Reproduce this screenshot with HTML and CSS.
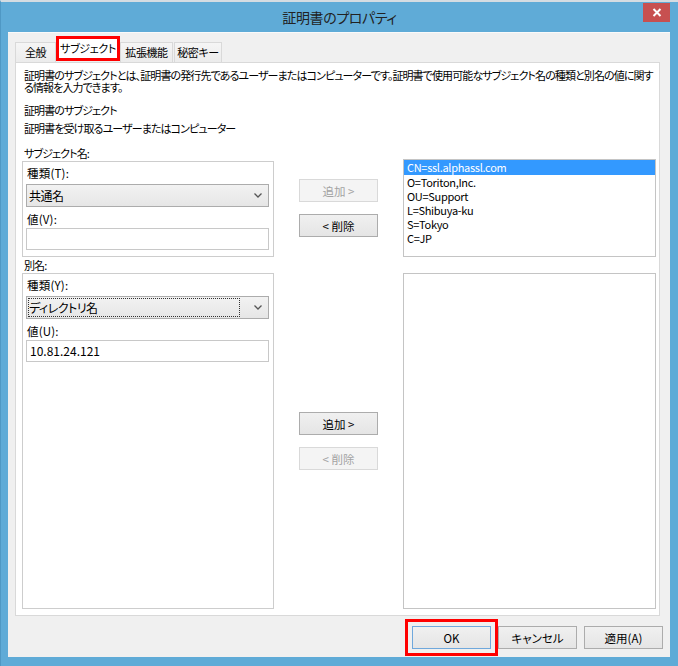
FILE: index.html
```html
<!DOCTYPE html>
<html lang="ja">
<head>
    <meta charset="UTF-8">
    <title>証明書のプロパティ</title>
    <link rel="stylesheet" href="styles.css">
</head>
<body>

<div class="window">
    <!-- Title bar -->
    <div class="titlebar">
        <span class="title">証明書のプロパティ</span>
        <div class="close">
            <svg width="10" height="9" viewBox="0 0 10 9">
                <path d="M1.5 1 L8.5 8 M8.5 1 L1.5 8" stroke="#fff" stroke-width="2" fill="none"/>
            </svg>
        </div>
    </div>

    <div class="client">
        <div class="tabs">
            <div class="tab t1">全般</div>
            <div class="tab t2 selected">サブジェクト</div>
            <div class="tab t3">拡張機能</div>
            <div class="tab t4">秘密キー</div>
        </div>

        <div class="panel">
            <p class="desc">証明書のサブジェクトとは、証明書の発行先であるユーザーまたはコンピューターです。証明書で使用可能なサブジェクト名の種類と別名の値に関す<br>る情報を入力できます。</p>
            <p class="heading">証明書のサブジェクト</p>
            <p class="sub">証明書を受け取るユーザーまたはコンピューター</p>

            <div class="fields">
                <!-- Subject name -->
                <div class="label row1">サブジェクト名:</div>
                <div class="group row2">
                    <div class="flabel">種類(T):</div>
                    <div class="combo">
                        <span class="combo-text">共通名</span>
                        <svg class="chevron" width="8" height="5" viewBox="0 0 8 5"><path d="M0.5 0.5 L4 4 L7.5 0.5" stroke="#555" stroke-width="1.3" fill="none"/></svg>
                    </div>
                    <div class="flabel gap">値(V):</div>
                    <div class="input"></div>
                </div>
                <div class="btns top">
                    <button class="btn" disabled>追加 &gt;</button>
                    <button class="btn">&lt; 削除</button>
                </div>
                <ul class="list top">
                    <li class="sel">CN=ssl.alphassl.com</li>
                    <li>O=Toriton,Inc.</li>
                    <li>OU=Support</li>
                    <li>L=Shibuya-ku</li>
                    <li>S=Tokyo</li>
                    <li>C=JP</li>
                </ul>

                <!-- Alternative name -->
                <div class="label row3">別名:</div>
                <div class="group row4">
                    <div class="flabel">種類(Y):</div>
                    <div class="combo">
                        <span class="combo-text focus">ディレクトリ名</span>
                        <svg class="chevron" width="8" height="5" viewBox="0 0 8 5"><path d="M0.5 0.5 L4 4 L7.5 0.5" stroke="#555" stroke-width="1.3" fill="none"/></svg>
                    </div>
                    <div class="flabel gap">値(U):</div>
                    <div class="input">10.81.24.121</div>
                </div>
                <div class="btns bottom">
                    <button class="btn">追加 &gt;</button>
                    <button class="btn" disabled>&lt; 削除</button>
                </div>
                <ul class="list bottom"></ul>
            </div>
        </div>

        <div class="footer">
            <button class="btn ok">OK</button>
            <button class="btn">キャンセル</button>
            <button class="btn">適用(A)</button>
        </div>
    </div>
</div>

</body>
</html>
```

FILE: styles.css
```css
* {
    margin: 0;
    padding: 0;
    box-sizing: border-box;
}

body {
    background: #5fabd7;
    font-family: 'Noto Sans CJK JP', 'Noto Sans', sans-serif;
    font-size: 11px;
    letter-spacing: -0.9px;
    font-feature-settings: "palt";
    color: #000;
}

.window {
    width: 678px;
    height: 666px;
    background: #5fabd7;
    border-top: 2px solid #d4dce2;
    border-left: 1px solid #4f98c4;
    display: flex;
    flex-direction: column;
}

/* Title bar */
.titlebar {
    height: 30px;
    display: grid;
    grid-template-columns: 1fr auto 1fr;
    align-items: center;
}

.title {
    grid-column: 2;
    font-size: 14px;
    letter-spacing: -0.4px;
    color: #222;
}

.close {
    grid-column: 3;
    justify-self: end;
    align-self: start;
    margin-top: 1px;
    margin-right: 8px;
    width: 27px;
    height: 19px;
    background: #c75050;
    display: flex;
    align-items: center;
    justify-content: center;
}

/* Client area */
.client {
    margin: 0 8px 0 7px;
    height: 625px;
    background: #f0f0f0;
    border-top: 1px solid #fafafa;
    padding: 3px 0 8px 7px;
    display: flex;
    flex-direction: column;
}

.tabs {
    height: 26px;
    display: flex;
    align-items: flex-end;
}

.tab {
    height: 20px;
    line-height: 19px;
    text-align: center;
    border: 1px solid #d9d9d9;
    border-bottom: none;
    background: linear-gradient(#f5f5f5, #ececec);
    letter-spacing: -0.4px;
    white-space: nowrap;
}

.t1 { width: 41px; }
.t3 { width: 53px; }
.t4 { width: 48px; margin-left: 1px; }

.tab.selected {
    width: 64px;
    height: 25px;
    margin-bottom: 1px;
    border: 3px solid #ff0000;
    background: #fff;
    line-height: 19px;
}

/* Tab page */
.panel {
    flex: 1;
    margin-right: 10px;
    background: #fff;
    border: 1px solid #d9d9d9;
    padding: 6px 3px 6px 6px;
    display: flex;
    flex-direction: column;
}

.desc {
    padding-left: 2px;
    line-height: 12px;
    white-space: nowrap;
}

.heading {
    padding-left: 2px;
    margin-top: 10px;
    line-height: 14px;
}

.sub {
    padding-left: 2px;
    margin-top: 4px;
    line-height: 14px;
}

.fields {
    flex: 1;
    margin-top: 11px;
    display: grid;
    grid-template-columns: 252px 79px 253px;
    grid-template-rows: 15px 96px 16px 1fr;
    column-gap: 25px;
}

.label {
    grid-column: 1;
    padding-left: 2px;
    line-height: 15px;
}

.row1 { grid-row: 1; }
.row2 { grid-row: 2; }
.row3 { grid-row: 3; line-height: 16px; }
.row4 { grid-row: 4; }

.group {
    grid-column: 1;
    border: 1px solid #cdcdcd;
    background: #fff;
    padding: 4px 4px 6px 3px;
}

.flabel {
    line-height: 14px;
    padding-left: 1px;
    font-size: 11.5px;
    letter-spacing: 0.2px;
}

.flabel.gap {
    margin-top: 5px;
}

.combo {
    margin-top: 4px;
    height: 23px;
    border: 1px solid #acacac;
    background: linear-gradient(#f2f2f2, #e6e6e6);
    display: flex;
    align-items: center;
    padding: 0 6px 0 1px;
}

.combo-text {
    flex: 1;
    padding-left: 1px;
    line-height: 19px;
    font-size: 12px;
    letter-spacing: -0.5px;
}

.combo-text.focus {
    margin-right: 10px;
    outline: 1px dotted #333;
    outline-offset: -1px;
}

.chevron {
    margin-left: 4px;
}

.input {
    margin-top: 2px;
    height: 22px;
    border: 1px solid #c8c8c8;
    background: #fff;
    padding-left: 3px;
    line-height: 20px;
    font-size: 12px;
    letter-spacing: 0;
}

/* Middle buttons */
.btns {
    grid-column: 2;
    display: flex;
    flex-direction: column;
    gap: 12px;
}

.btns.top {
    grid-row: 1 / 3;
    padding-top: 33px;
}

.btns.bottom {
    grid-row: 3 / 5;
    padding-top: 155px;
}

.btn {
    width: 79px;
    height: 23px;
    border: 1px solid #acacac;
    background: linear-gradient(#f0f0f0, #e5e5e5);
    font-family: 'Noto Sans CJK JP', 'Noto Sans', sans-serif;
    font-size: 11.5px;
    letter-spacing: 0;
    font-feature-settings: "palt";
    color: #000;
}

.btn:disabled {
    border-color: #d9d9d9;
    background: #f4f4f4;
    color: #a3a3a3;
}

/* List boxes */
.list {
    grid-column: 3;
    list-style: none;
    border: 1px solid #c4c4c4;
    background: #fff;
}

.list.top {
    grid-row: 1 / 3;
    align-self: end;
    height: 98px;
}

.list.bottom {
    grid-row: 4;
}

.list li {
    line-height: 14px;
    padding-left: 3px;
    white-space: nowrap;
    letter-spacing: -0.3px;
}

.list li.sel {
    background: #3399ff;
    color: #fff;
    line-height: 15px;
}

/* Dialog buttons */
.footer {
    margin-top: 10px;
    padding-right: 7px;
    display: flex;
    justify-content: flex-end;
    gap: 7px;
}

.btn.ok {
    border-color: #6fa8dc;
    outline: 3px solid #ff0000;
    outline-offset: 4px;
}
```
